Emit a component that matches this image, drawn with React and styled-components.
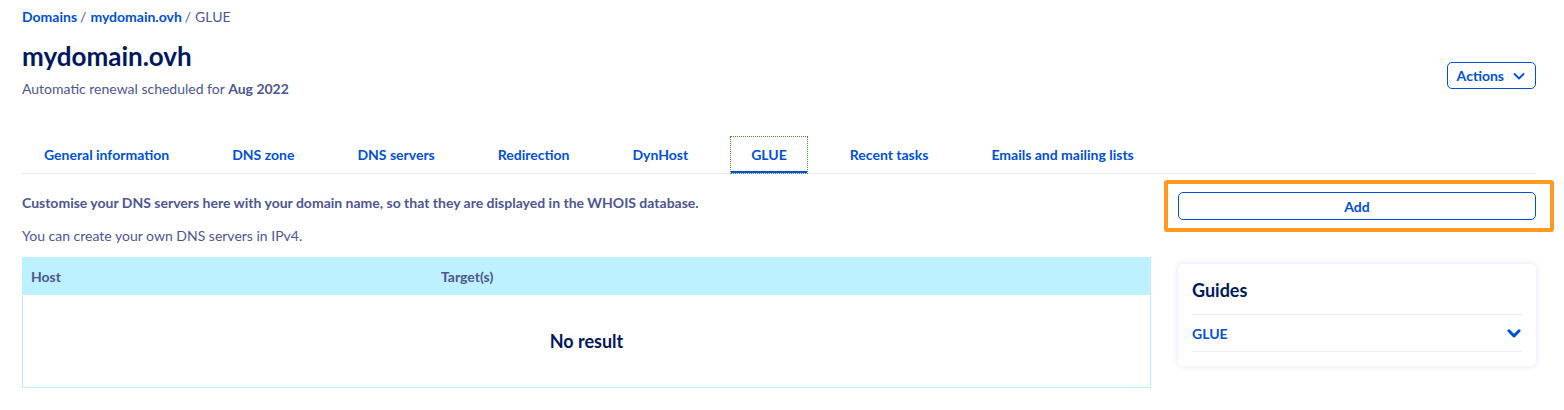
import React from 'react'
import styled, { createGlobalStyle } from 'styled-components'

const GlobalStyle = createGlobalStyle`
    body {
        margin: 0;
        background: #fff;
        font-family: Lato, "Noto Sans", sans-serif;
        color: #4d5693;
    }
`

const Page = styled.div`
    padding: 8px 28px 0 22px;
`
const Breadcrumb = styled.div`
    font-size: 14px;
    line-height: 18px;
    color: #4d5693;
    a {
        color: #0050d7;
        font-weight: 700;
        text-decoration: none;
    }
    span {
        margin: 0 4px 0 3px;
    }
`
const Header = styled.div`
    display: flex;
    justify-content: space-between;
    align-items: flex-end;
`
const Title = styled.h1`
    margin: 15px 0 0;
    font-size: 26px;
    line-height: 30px;
    font-weight: 700;
    color: #00185e;
`
const Subtitle = styled.p`
    margin: 8px 0 0;
    font-size: 14px;
    line-height: 20px;
    b {
        font-weight: 700;
    }
`
const OutlineButton = styled.button`
    display: flex;
    align-items: center;
    justify-content: center;
    gap: ${p => p.$gap || 0}px;
    height: ${p => p.$height || 27}px;
    padding: 0 9px;
    border: 1px solid #0050d7;
    border-radius: 5px;
    background: #fff;
    color: #0050d7;
    font-family: inherit;
    font-size: 14px;
    font-weight: 700;
    cursor: pointer;
    width: ${p => (p.$block ? '100%' : 'auto')};
`
const ActionsButton = styled(OutlineButton)`
    margin-bottom: 10px;
`
const Tabs = styled.nav`
    display: flex;
    gap: 23px;
    margin-top: 38px;
    height: 36px;
    border-bottom: 1px solid #e8eef4;
    padding-left: 2px;
`
const Tab = styled.div`
    display: flex;
    align-items: center;
    padding: 0 20px;
    font-size: 14px;
    font-weight: 700;
    color: #0050d7;
    cursor: pointer;
    box-sizing: border-box;
    border-bottom: 2px solid ${p => (p.$active ? '#0050d7' : 'transparent')};
    outline: ${p => (p.$active ? '1px dotted #4a8a2a' : 'none')};
    outline-offset: 0;
`
const Body = styled.div`
    display: flex;
    gap: 27px;
`
const Main = styled.div`
    width: 1129px;
`
const Lead = styled.p`
    margin: 20px 0 0;
    font-size: 14px;
    line-height: 18px;
    font-weight: 700;
`
const Note = styled.p`
    margin: 15px 0 0;
    font-size: 14px;
    line-height: 18px;
`
const Table = styled.div`
    margin-top: 12px;
    border: 1px solid #bef1ff;
`
const HeadRow = styled.div`
    display: grid;
    grid-template-columns: 410px 1fr;
    height: 37px;
    align-items: center;
    background: #bef1ff;
    padding: 0 8px;
    font-size: 14px;
    font-weight: 700;
`
const Empty = styled.div`
    height: 92px;
    display: flex;
    align-items: center;
    justify-content: center;
    font-size: 18px;
    font-weight: 700;
    color: #00185e;
`
const Side = styled.aside`
    width: 358px;
`
const Highlight = styled.div`
    margin: 6px -18px 0 -14px;
    padding: 8px 14px 8px 10px;
    border: 4px solid #ff9a1f;
    border-radius: 3px;
`
const Card = styled.div`
    margin-top: 32px;
    background: #fff;
    border-radius: 5px;
    box-shadow: 0 0 6px rgba(0, 40, 200, 0.13);
    padding: 14px 14px 14px;
`
const CardTitle = styled.h2`
    margin: 0;
    font-size: 18px;
    line-height: 24px;
    font-weight: 700;
    color: #00185e;
    padding-bottom: 12px;
    border-bottom: 1px solid #ebeef3;
`
const GuideRow = styled.div`
    display: flex;
    justify-content: space-between;
    align-items: center;
    height: 36px;
    border-bottom: 1px solid #ebeef3;
    font-size: 14px;
    font-weight: 700;
    color: #0050d7;
`

function Chevron({ size = 14, width = 2 }) {
    return (
        <svg width={size} height={size} viewBox="0 0 14 14" fill="none">
            <path d="M2.5 5 L7 9.5 L11.5 5" stroke="#0050d7" strokeWidth={width} strokeLinecap="round" strokeLinejoin="round" />
        </svg>
    )
}

const tabs = [
    'General information',
    'DNS zone',
    'DNS servers',
    'Redirection',
    'DynHost',
    'GLUE',
    'Recent tasks',
    'Emails and mailing lists',
]

export default function App() {
    return (
        <Page>
            <GlobalStyle />
            <Breadcrumb>
                <a href="#">Domains</a><span>/</span>
                <a href="#">mydomain.ovh</a><span>/</span>GLUE
            </Breadcrumb>
            <Header>
                <div>
                    <Title>mydomain.ovh</Title>
                    <Subtitle>Automatic renewal scheduled for <b>Aug 2022</b></Subtitle>
                </div>
                <ActionsButton $gap={8}>
                    Actions
                    <Chevron size={14} width={1.8} />
                </ActionsButton>
            </Header>
            <Tabs>
                {tabs.map(t => (
                    <Tab key={t} $active={t === 'GLUE'}>{t}</Tab>
                ))}
            </Tabs>
            <Body>
                <Main>
                    <Lead>Customise your DNS servers here with your domain name, so that they are displayed in the WHOIS database.</Lead>
                    <Note>You can create your own DNS servers in IPv4.</Note>
                    <Table>
                        <HeadRow>
                            <div>Host</div>
                            <div>Target(s)</div>
                        </HeadRow>
                        <Empty>No result</Empty>
                    </Table>
                </Main>
                <Side>
                    <Highlight>
                        <OutlineButton $block $height={28}>Add</OutlineButton>
                    </Highlight>
                    <Card>
                        <CardTitle>Guides</CardTitle>
                        <GuideRow>
                            GLUE
                            <Chevron size={16} width={2.6} />
                        </GuideRow>
                    </Card>
                </Side>
            </Body>
        </Page>
    )
}
